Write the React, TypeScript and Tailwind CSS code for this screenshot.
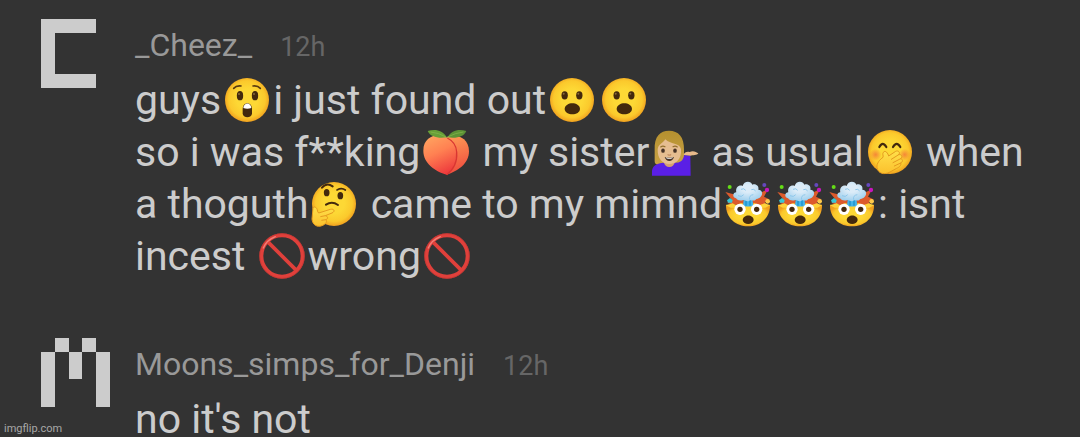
import type { ReactNode } from 'react';

function Emoji({ label, children }: { label: string; children: ReactNode }) {
  return (
    <svg
      role="img"
      aria-label={label}
      viewBox="0 0 156 132"
      className="inline-block h-[44px] w-[52px] overflow-visible align-[-8px]"
    >
      {children}
    </svg>
  );
}

function Gradients() {
  return (
    <svg aria-hidden="true" className="absolute h-0 w-0">
      <defs>
        <radialGradient id="face" cx="50%" cy="48%" r="52%">
          <stop offset="0.45" stopColor="#fdd835" />
          <stop offset="0.8" stopColor="#fbc92c" />
          <stop offset="1" stopColor="#f0a01f" />
        </radialGradient>
        <radialGradient id="blush">
          <stop offset="0" stopColor="#f2703a" stopOpacity="0.75" />
          <stop offset="1" stopColor="#f2703a" stopOpacity="0" />
        </radialGradient>
        <linearGradient id="peachLeft" x1="0.2" y1="0" x2="0.6" y2="1">
          <stop offset="0" stopColor="#ffa460" />
          <stop offset="0.45" stopColor="#ff8152" />
          <stop offset="1" stopColor="#ee3b3d" />
        </linearGradient>
        <linearGradient id="peachRight" x1="0.3" y1="0" x2="0.5" y2="1">
          <stop offset="0" stopColor="#ff9a55" />
          <stop offset="1" stopColor="#ee4a3e" />
        </linearGradient>
        <linearGradient id="hand" x1="0" y1="0" x2="0" y2="1">
          <stop offset="0" stopColor="#ffe04a" />
          <stop offset="1" stopColor="#fbc02d" />
        </linearGradient>
        <linearGradient id="hair" x1="0" y1="0" x2="0" y2="1">
          <stop offset="0" stopColor="#b5902f" />
          <stop offset="1" stopColor="#c9a245" />
        </linearGradient>
        <radialGradient id="cloud" cx="50%" cy="35%" r="65%">
          <stop offset="0.3" stopColor="#dcecf8" />
          <stop offset="1" stopColor="#9fd0ee" />
        </radialGradient>
      </defs>
    </svg>
  );
}

function Face() {
  return <circle cx="78" cy="66" r="66" fill="url(#face)" />;
}

function Astonished() {
  return (
    <Emoji label="astonished face">
      <Face />
      <g fill="none" stroke="#5a3a10" strokeWidth="5" strokeLinecap="round">
        <path d="M38 31Q46 22 60 24" />
        <path d="M96 24Q110 22 118 31" />
      </g>
      <g fill="#43290d">
        <ellipse cx="57" cy="53" rx="9.5" ry="14" />
        <ellipse cx="102" cy="53" rx="9.5" ry="14" />
        <path d="M65 94C65 70 93 70 93 94V106C93 122 65 122 65 106Z" />
      </g>
      <path d="M67 90C68 72 90 72 91 90Q79 94 67 90Z" fill="#fff" />
      <g fill="#87683a">
        <circle cx="54" cy="48" r="3" />
        <circle cx="99" cy="48" r="3" />
      </g>
    </Emoji>
  );
}

function OpenMouth() {
  return (
    <Emoji label="face with open mouth">
      <Face />
      <g fill="#43290d">
        <ellipse cx="56" cy="52" rx="9.5" ry="12.5" />
        <ellipse cx="100" cy="52" rx="9.5" ry="12.5" />
        <path d="M56 92C58 70 100 70 102 92C102 114 56 114 56 92Z" />
      </g>
      <g fill="#87683a">
        <circle cx="53" cy="47" r="3" />
        <circle cx="97" cy="47" r="3" />
      </g>
    </Emoji>
  );
}

function Peach() {
  return (
    <Emoji label="peach">
      <path d="M78 24C96 10 147 16 147 64C147 102 112 124 80 134Z" fill="url(#peachRight)" />
      <path
        d="M82 24C64 8 10 12 10 62C10 100 46 124 80 134C102 118 112 96 110 66C109 44 96 30 82 24Z"
        fill="url(#peachLeft)"
      />
      <path
        d="M82 24C98 32 109 46 110 66C112 94 102 118 80 134"
        fill="none"
        stroke="#d93632"
        strokeWidth="4"
      />
      <path d="M80 22C68 -2 42 -3 23 3C30 20 54 26 80 22Z" fill="#689f38" />
      <path d="M83 22C94 -2 120 -3 139 3C132 20 110 26 83 22Z" fill="#5d9336" />
      <path d="M32 6Q56 8 80 22Q108 8 130 6" fill="none" stroke="#8bb84e" strokeWidth="2" />
    </Emoji>
  );
}

function TippingHand() {
  return (
    <Emoji label="woman tipping hand, medium-light skin tone">
      <path
        d="M17 60C15 18 34 2 60 2C88 2 106 20 105 60V94Q104 104 92 105H28Q17 104 17 94Z"
        fill="url(#hair)"
      />
      <path
        d="M9 137V122C11 106 24 100 44 98H80C92 98 99 94 103 84L106 75L124 77L125 137Z"
        fill="#5a1fe6"
      />
      <path
        d="M104 75C106 66 114 64 122 66C132 60 142 66 148 70C144 76 132 76 124 77Z"
        fill="#e8b98a"
      />
      <path d="M44 96H78Q74 111 61 111Q48 111 44 96Z" fill="#d6a06f" />
      <path
        d="M26 58C28 42 40 42 49 28C64 44 92 38 96 58C98 88 82 102 61 102C40 102 25 86 26 58Z"
        fill="#e6bd90"
      />
      <g fill="#473226">
        <ellipse cx="42" cy="62" rx="5.5" ry="6.5" />
        <ellipse cx="78" cy="62" rx="5.5" ry="6.5" />
        <path d="M47 81Q61 85 75 81Q71 93 61 93Q51 93 47 81Z" />
      </g>
      <path d="M50 82Q61 86 72 82L70 85Q61 88 52 85Z" fill="#fff" />
      <g fill="none" stroke="#93702e" strokeWidth="3.5" strokeLinecap="round">
        <path d="M35 51Q41 46 48 50" />
        <path d="M72 50Q79 46 85 51" />
        <path d="M57 74Q61 77 65 74" stroke="#c48c60" />
      </g>
    </Emoji>
  );
}

function HandOverMouth() {
  return (
    <Emoji label="face with hand over mouth">
      <Face />
      <circle cx="35" cy="74" r="18" fill="url(#blush)" />
      <circle cx="122" cy="74" r="18" fill="url(#blush)" />
      <g fill="none" stroke="#43290d" strokeWidth="6.5" strokeLinecap="round">
        <path d="M46 51Q56 32 67 51" />
        <path d="M87 51Q98 32 109 51" />
      </g>
      <path
        d="M58 67C64 59 72 70 74 78L95 64C103 60 110 68 104 74C113 72 117 81 110 86C117 87 117 96 110 99C113 106 105 112 98 115L78 126C60 136 42 130 39 113C37 100 48 88 57 82C59 77 54 72 58 67Z"
        fill="url(#hand)"
        stroke="#e59a1e"
        strokeWidth="3"
      />
      <path
        d="M104 74L82 88M110 86L87 98M110 99L91 108"
        fill="none"
        stroke="#e59a1e"
        strokeWidth="3"
        strokeLinecap="round"
      />
    </Emoji>
  );
}

function Thinking() {
  return (
    <Emoji label="thinking face">
      <Face />
      <g fill="none" stroke="#43290d" strokeWidth="6" strokeLinecap="round">
        <path d="M42 17Q56 0 74 13" />
        <path d="M87 24Q101 16 112 24" strokeWidth="5" />
        <path d="M54 68Q72 56 90 69" />
      </g>
      <g fill="#43290d">
        <ellipse cx="56" cy="32" rx="8.5" ry="11" />
        <ellipse cx="97" cy="41" rx="8.5" ry="11" />
      </g>
      <path
        d="M15 78C20 71 28 77 29 89L32 93L67 82C79 79 82 89 72 93L52 101C61 103 60 111 54 113C59 121 50 128 42 131C27 137 13 128 12 111Z"
        fill="url(#hand)"
        stroke="#e59a1e"
        strokeWidth="3"
        strokeLinejoin="round"
      />
      <path d="M52 101L37 104M54 113L40 115" fill="none" stroke="#e59a1e" strokeWidth="3" />
    </Emoji>
  );
}

function ExplodingHead() {
  return (
    <Emoji label="exploding head">
      <path
        d="M30 68L16 62L30 54L10 30L40 38L50 12L70 22L100 10L112 34L138 22L126 44L142 52L128 60L136 70Z"
        fill="#dc5a2c"
      />
      <path d="M12 68H144C145 108 115 133 78 133C41 133 11 108 12 68Z" fill="url(#face)" />
      <path d="M12 70L32 64L42 70L58 63L78 71L98 63L112 70L128 64L144 70L130 77H26Z" fill="#fdd33a" />
      <path d="M63 72L66 42H90L94 72Q78 75 63 72Z" fill="#42b4e8" />
      <path d="M72 71V54M84 71V52" stroke="#1f91cb" strokeWidth="4" />
      <path
        d="M42 49C30 46 32 31 43 31C39 15 53 7 62 12C65 -4 87 -5 91 8C101 4 112 12 109 23C121 23 124 37 116 44C111 51 104 49 101 53C95 60 87 51 82 56C74 61 69 52 64 54C56 57 47 56 42 49Z"
        fill="url(#cloud)"
      />
      <path
        d="M57 22Q66 17 71 25M88 23Q96 19 101 27M48 41Q59 47 65 38M83 53Q80 40 94 38"
        fill="none"
        stroke="#8dc8ec"
        strokeWidth="3"
      />
      <circle cx="54" cy="82" r="17" fill="#fff" />
      <circle cx="104" cy="82" r="17" fill="#fff" />
      <g fill="#43290d">
        <circle cx="54" cy="82" r="8" />
        <circle cx="104" cy="82" r="8" />
        <path d="M62 114C64 96 94 96 95 114C93 130 64 130 62 114Z" />
      </g>
      <circle cx="23" cy="15" r="6" fill="#64dd17" />
      <circle cx="127" cy="9" r="6" fill="#6548bd" />
      <circle cx="135" cy="24" r="6.5" fill="#c816bd" />
      <path d="M15 55L24 48L32 54L30 62H18Z" fill="#37c8d6" />
      <circle cx="137" cy="58" r="7" fill="#ffca4b" />
    </Emoji>
  );
}

function Prohibited() {
  return (
    <Emoji label="prohibited">
      <g fill="none" stroke="#e0403b">
        <circle cx="78" cy="66" r="62" strokeWidth="12" />
        <path d="M34 22L122 110" strokeWidth="11" />
      </g>
      <circle cx="78" cy="66" r="67" fill="none" stroke="#bd3532" strokeWidth="2" />
      <path d="M22 42Q32 18 58 8" fill="none" stroke="#f38078" strokeWidth="4" strokeLinecap="round" />
    </Emoji>
  );
}

const avatars = {
  C: 'M0 0H4V1H1V4H4V5H0Z',
  M: 'M1 0H2V1H1ZM3 0H4V1H3ZM0 1H1V5H0ZM2 1H3V3H2ZM4 1H5V5H4Z',
};

type CommentProps = {
  avatar: keyof typeof avatars;
  name: string;
  time: string;
  children: ReactNode;
};

function Comment({ avatar, name, time, children }: CommentProps) {
  return (
    <article className="flex gap-[25px]">
      <svg
        aria-hidden="true"
        viewBox="0 0 5 5"
        shapeRendering="crispEdges"
        className="h-[69px] w-[69px] shrink-0"
      >
        <path d={avatars[avatar]} fill="#cccccc" />
      </svg>
      <div className="min-w-0 flex-1">
        <header className="flex h-[55px] items-baseline gap-7 pt-[7px]">
          <h2 className="text-[32px] leading-[38px] text-[#999999]">{name}</h2>
          <time className="text-[27px] leading-[38px] text-[#666666]">{time}</time>
        </header>
        <p className="text-[41px] leading-[52px] text-[#cccccc]">{children}</p>
      </div>
    </article>
  );
}

export default function App() {
  return (
    <main className="relative h-screen overflow-hidden bg-[#333333] pt-[19px] pr-10 pl-[41px] font-['Roboto',sans-serif]">
      <Gradients />
      <div className="flex flex-col gap-14">
        <Comment avatar="C" name="_Cheez_" time="12h">
          guys
          <Astonished />i just found out
          <OpenMouth />
          <OpenMouth />
          <br />
          so i was f**king
          <Peach /> my sister
          <TippingHand /> as usual
          <HandOverMouth /> when a thoguth
          <Thinking /> came to my mimnd
          <ExplodingHead />
          <ExplodingHead />
          <ExplodingHead />: isnt incest <Prohibited />
          wrong
          <Prohibited />
        </Comment>
        <Comment avatar="M" name="Moons_simps_for_Denji" time="12h">
          no it's not
        </Comment>
      </div>
      <small className="absolute bottom-0 left-1 text-[11px] leading-4 text-[#a8a8a8]">imgflip.com</small>
    </main>
  );
}
